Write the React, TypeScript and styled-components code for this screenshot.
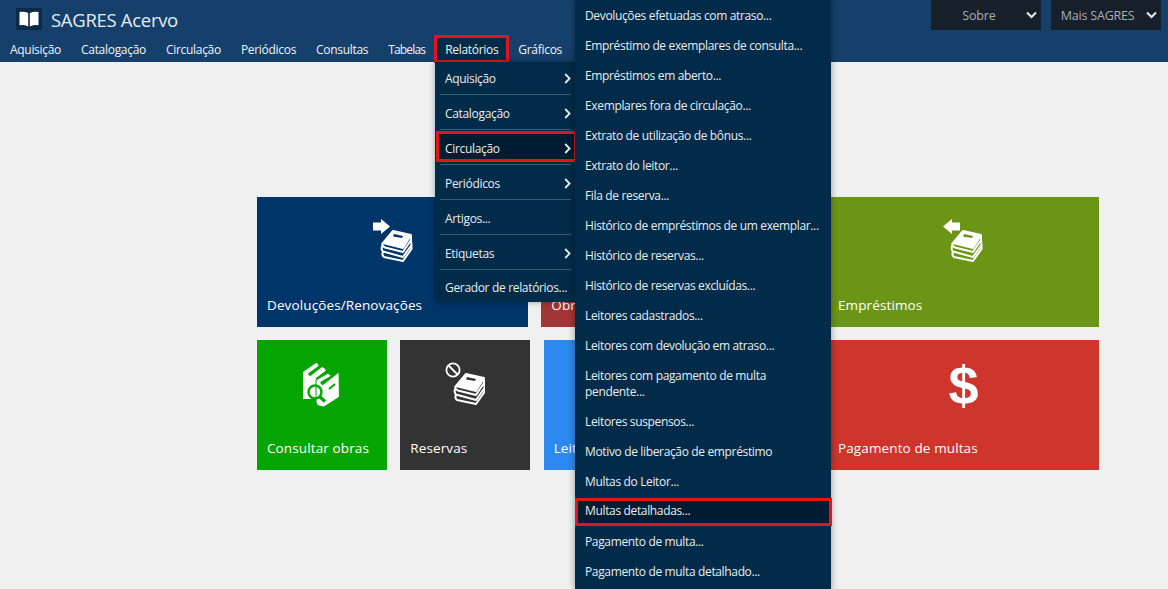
import { FC, ReactNode } from 'react';
import styled, { createGlobalStyle } from 'styled-components';

const GlobalStyle = createGlobalStyle`
    html, body {
        margin: 0;
        height: 100%;
        overflow: hidden;
        background: #f0f0f0;
    }
    body {
        font-family: "Open Sans", "Noto Sans", "Liberation Sans", sans-serif;
    }
`;

const RED = '#e3151b';
const MENU_BG = '#012b48';
const MENU_ACTIVE = '#021d33';

const Page = styled.div`
    position: relative;
    width: 1168px;
    height: 589px;
    overflow: hidden;
    background: #f0f0f0;
`;

const Header = styled.header`
    height: 62px;
    background: #15406b;
`;

const TopRow = styled.div`
    height: 36px;
    display: flex;
    justify-content: space-between;
    align-items: flex-start;
    padding: 0 7px 0 16px;
`;

const Brand = styled.div`
    display: flex;
    align-items: center;
    gap: 9px;
    height: 22px;
    margin-top: 8px;
`;

const LogoBox = styled.div`
    width: 26px;
    height: 22px;
    background: #0d2a4a;
    display: flex;
    align-items: center;
    justify-content: center;
`;

const BrandName = styled.span`
    color: #e4ebf2;
    font-size: 18.5px;
    letter-spacing: -0.3px;
`;

const TopButtons = styled.div`
    display: flex;
    gap: 10px;
`;

const TopButton = styled.div`
    width: 110px;
    height: 30px;
    box-sizing: border-box;
    background: #17202a;
    color: #a9adb1;
    font-size: 12.5px;
    letter-spacing: -0.2px;
    display: flex;
    align-items: center;
    justify-content: flex-end;
    gap: 11px;
    padding-right: 4.5px;
`;

const TopButtonLabel = styled.span<{ $right: number }>`
    margin-right: ${(p) => p.$right}px;
`;

const Nav = styled.nav`
    display: flex;
    height: 26px;
`;

const NavItem = styled.a<{ $marked?: boolean }>`
    position: relative;
    padding: 0 10px;
    line-height: 28px;
    font-size: 12px;
    letter-spacing: -0.3px;
    color: #eef2f6;
    white-space: nowrap;
    background: ${(p) => (p.$marked ? MENU_BG : 'transparent')};
    box-shadow: ${(p) => (p.$marked ? `inset 0 0 0 2px ${RED}` : 'none')};
    outline: ${(p) => (p.$marked ? `1px solid ${RED}` : 'none')};
    &:nth-child(6) {
        letter-spacing: -0.85px;
    }
`;

const Main = styled.main`
    padding: 135px 0 0 257px;
    display: flex;
    flex-direction: column;
    gap: 13px;
`;

const TileRow = styled.div`
    display: flex;
    gap: 13.33px;
`;

const Tile = styled.div<{ $bg: string; $width: number }>`
    width: ${(p) => p.$width}px;
    height: 130px;
    box-sizing: border-box;
    background: ${(p) => p.$bg};
    padding: 22px 10px 13px;
    display: flex;
    flex-direction: column;
    align-items: center;
    color: #fff;
`;

const TileIcon = styled.div`
    height: 45px;
    display: flex;
    justify-content: center;
`;

const Dollar = styled.span`
    font-family: "Liberation Sans", sans-serif;
    font-size: 54px;
    font-weight: 700;
    line-height: 46px;
`;

const TileLabel = styled.span`
    margin-top: auto;
    align-self: flex-start;
    font-size: 13.5px;
    font-weight: 500;
    letter-spacing: 0.12px;
    line-height: 18px;
    white-space: nowrap;
`;

const FirstMenu = styled.ul`
    position: absolute;
    left: 435px;
    top: 62px;
    width: 140px;
    height: 240px;
    margin: 0;
    padding: 0;
    list-style: none;
    background: ${MENU_BG};
    box-shadow: 0 0 6px rgba(0, 0, 0, 0.35);
`;

const FirstItem = styled.li<{ $marked?: boolean }>`
    position: relative;
    height: 34px;
    box-sizing: border-box;
    padding: 3px 4px 0 10px;
    display: flex;
    align-items: center;
    justify-content: space-between;
    font-size: 12px;
    letter-spacing: -0.33px;
    color: #e6edf2;
    white-space: nowrap;
    &:first-child {
        height: 32px;
        padding-top: 0;
    }
    &:last-child {
        height: 32px;
    }
    &::before {
        content: ${(p) => (p.$marked ? '""' : 'none')};
        position: absolute;
        inset: 1px -2px 2px 1px;
        background: ${MENU_ACTIVE};
        border: 3px solid ${RED};
    }
    & > * {
        position: relative;
    }
`;

const FirstSeparator = styled.li`
    height: 1px;
    margin: 0 4px 0 5px;
    background: #3d5a70;
`;

const SecondMenu = styled.ul`
    position: absolute;
    left: 575px;
    top: 0;
    width: 256px;
    height: 589px;
    margin: 0;
    padding: 1px 0 0;
    list-style: none;
    background: ${MENU_BG};
    box-shadow: 0 0 7px rgba(0, 0, 0, 0.4);
`;

const SecondItem = styled.li<{ $marked?: boolean }>`
    position: relative;
    box-sizing: border-box;
    padding: ${(p) => (p.$marked ? '5.5px 10px 8px' : '6.75px 10px')};
    line-height: 16.5px;
    font-size: 12px;
    letter-spacing: -0.35px;
    color: #e6edf2;
    &::before {
        content: ${(p) => (p.$marked ? '""' : 'none')};
        position: absolute;
        inset: 0 -1px 2px 0;
        background: ${MENU_ACTIVE};
        border: 3px solid ${RED};
    }
    & > span {
        position: relative;
    }
`;

const Chevron: FC = () => (
    <svg width="7" height="11" viewBox="0 0 7 11">
        <path d="M1.2 1 L5.6 5.5 L1.2 10" fill="none" stroke="#e6edf2" strokeWidth="1.8" />
    </svg>
);

const CaretDown: FC = () => (
    <svg width="11" height="8" viewBox="0 0 11 8">
        <path d="M1 1.5 L5.5 6 L10 1.5" fill="none" stroke="#e9ecef" strokeWidth="2" />
    </svg>
);

const BookLogo: FC = () => (
    <svg width="20" height="16" viewBox="0 0 20 16">
        <path d="M0.5 1 Q5 0 9.2 2 V15.5 Q5 13.5 0.5 14.2 Z" fill="#fff" />
        <path d="M19.5 1 Q15 0 10.8 2 V15.5 Q15 13.5 19.5 14.2 Z" fill="#fff" />
    </svg>
);

// pile of books, drawn at x/y offset so that the small sign can sit beside it
const Books: FC<{ x: number; y: number; slot: string }> = ({ x, y, slot }) => (
    <g transform={`translate(${x} ${y})`}>
        <path d="M12 1 L30 5 L22 18 L2 13 Z" fill="#fff" stroke="#fff" strokeWidth="2" strokeLinejoin="round" />
        <path d="M13 4 L22 6 L21 8 L12 6.5 Z" fill={slot} />
        <path
            d="M30 6 L30 10 L22 22 L4 17.5 Q0.5 16 1.5 13 M1.5 15.5 Q-0.5 19 2 21.5 L22 27 L30.5 15 L30 10 M2 22 Q0.5 25 3 27 L22 31 L30.5 19 L30.5 15"
            fill="none"
            stroke="#fff"
            strokeWidth="2"
            strokeLinejoin="round"
        />
    </g>
);

const ReturnIcon: FC = () => (
    <svg width="40" height="43" viewBox="0 0 40 43">
        <path d="M0 3.5 H8 V0 L17 7.5 L8 15 V11.5 H0 Z" fill="#fff" />
        <Books x={8} y={11} slot="#00356a" />
    </svg>
);

const LoanIcon: FC = () => (
    <svg width="40" height="43" viewBox="0 0 40 43">
        <path d="M17 3.5 H9 V0 L0 7.5 L9 15 V11.5 H17 Z" fill="#fff" />
        <Books x={8} y={11} slot="#6b9516" />
    </svg>
);

const BlockedIcon: FC = () => (
    <svg width="40" height="43" viewBox="0 0 40 43">
        <circle cx="8" cy="8" r="6.6" fill="none" stroke="#fff" strokeWidth="1.8" />
        <path d="M3.5 3.5 L12.5 12.5" stroke="#fff" strokeWidth="2" />
        <Books x={9} y={11} slot="#333" />
    </svg>
);

const SearchBooksIcon: FC = () => (
    <svg width="38" height="45" viewBox="0 0 38 45">
        <path d="M0 10 L13 1 Q15 1 15.5 4 L5.5 11 Q4.5 13 7.5 14 L19 5 Q22 6 23 8.5 L13 16 V37 H0 Z" fill="#fff" />
        <path
            d="M13 18 L25 11 L28.5 14 L18 20 Q17 22 20 22.5 L36 10 L36.5 35 L21 45 L16 44 Q13 43 13 40 Z"
            fill="#fff"
            stroke="#05a500"
            strokeWidth="1"
        />
        <path d="M26 27 L32 22" stroke="#05a500" strokeWidth="2" />
        <circle cx="12" cy="30" r="6.5" fill="none" stroke="#05a500" strokeWidth="2.4" />
        <path d="M17 35 L22 39.5" stroke="#05a500" strokeWidth="3.2" />
    </svg>
);

interface ITile {
    label: string;
    bg: string;
    width: number;
    icon?: ReactNode;
}

const topTiles: ITile[] = [
    { label: 'Devoluções/Renovações', bg: '#00356a', width: 271, icon: <ReturnIcon /> },
    { label: 'Obras', bg: '#a23535', width: 273.33 },
    { label: 'Empréstimos', bg: '#6b9516', width: 271, icon: <LoanIcon /> },
];

const bottomTiles: ITile[] = [
    { label: 'Consultar obras', bg: '#05a500', width: 130, icon: <SearchBooksIcon /> },
    { label: 'Reservas', bg: '#333333', width: 130, icon: <BlockedIcon /> },
    { label: 'Leitores', bg: '#2d89ef', width: 271 },
    { label: 'Pagamento de multas', bg: '#ce352c', width: 271, icon: <Dollar>$</Dollar> },
];

const navItems = ['Aquisição', 'Catalogação', 'Circulação', 'Periódicos', 'Consultas', 'Tabelas', 'Relatórios', 'Gráficos'];

const firstMenu = [
    { label: 'Aquisição', sub: true },
    { label: 'Catalogação', sub: true },
    { label: 'Circulação', sub: true, marked: true },
    { label: 'Periódicos', sub: true },
    { label: 'Artigos...', sub: false },
    { label: 'Etiquetas', sub: true },
    { label: 'Gerador de relatórios...', sub: false },
];

const secondMenu = [
    'Devoluções efetuadas com atraso...',
    'Empréstimo de exemplares de consulta...',
    'Empréstimos em aberto...',
    'Exemplares fora de circulação...',
    'Extrato de utilização de bônus...',
    'Extrato do leitor...',
    'Fila de reserva...',
    'Histórico de empréstimos de um exemplar...',
    'Histórico de reservas...',
    'Histórico de reservas excluídas...',
    'Leitores cadastrados...',
    'Leitores com devolução em atraso...',
    'Leitores com pagamento de multa pendente...',
    'Leitores suspensos...',
    'Motivo de liberação de empréstimo',
    'Multas do Leitor...',
    'Multas detalhadas...',
    'Pagamento de multa...',
    'Pagamento de multa detalhado...',
];

const renderTile = (tile: ITile) => (
    <Tile key={tile.label} $bg={tile.bg} $width={tile.width}>
        {tile.icon && <TileIcon>{tile.icon}</TileIcon>}
        <TileLabel>{tile.label}</TileLabel>
    </Tile>
);

const App: FC = () => {
    return (
        <Page>
            <GlobalStyle />
            <Header>
                <TopRow>
                    <Brand>
                        <LogoBox>
                            <BookLogo />
                        </LogoBox>
                        <BrandName>SAGRES Acervo</BrandName>
                    </Brand>
                    <TopButtons>
                        <TopButton>
                            <TopButtonLabel $right={19}>Sobre</TopButtonLabel>
                            <CaretDown />
                        </TopButton>
                        <TopButton>
                            <TopButtonLabel $right={0}>Mais SAGRES</TopButtonLabel>
                            <CaretDown />
                        </TopButton>
                    </TopButtons>
                </TopRow>
                <Nav>
                    {navItems.map((item) => (
                        <NavItem key={item} $marked={item === 'Relatórios'}>{item}</NavItem>
                    ))}
                </Nav>
            </Header>
            <Main>
                <TileRow>{topTiles.map(renderTile)}</TileRow>
                <TileRow>{bottomTiles.map(renderTile)}</TileRow>
            </Main>
            <FirstMenu>
                {firstMenu.flatMap((item, i) => {
                    const row = (
                        <FirstItem key={item.label} $marked={item.marked}>
                            <span>{item.label}</span>
                            {item.sub && <Chevron />}
                        </FirstItem>
                    );
                    return i === 0 ? [row] : [<FirstSeparator key={`sep-${i}`} />, row];
                })}
            </FirstMenu>
            <SecondMenu>
                {secondMenu.map((item) => (
                    <SecondItem key={item} $marked={item === 'Multas detalhadas...'}>
                        <span>{item}</span>
                    </SecondItem>
                ))}
            </SecondMenu>
        </Page>
    );
};

export default App;
